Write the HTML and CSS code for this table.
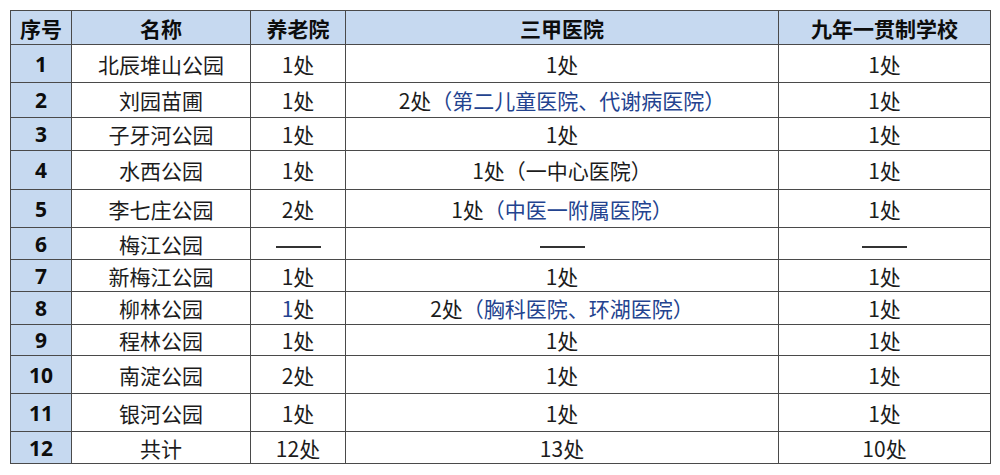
FILE: index.html
```html
<!DOCTYPE html>
<html lang="zh">
<head>
<meta charset="utf-8">
<link rel="stylesheet" href="styles.css">
</head>
<body>
<table class="grid">
  <colgroup>
    <col class="c-no"><col class="c-name"><col class="c-elder"><col class="c-hosp"><col class="c-school">
  </colgroup>
  <thead>
    <tr class="h34"><th>序号</th><th>名称</th><th>养老院</th><th>三甲医院</th><th>九年一贯制学校</th></tr>
  </thead>
  <tbody>
    <tr class="h38"><td class="no">1</td><td>北辰堆山公园</td><td>1处</td><td>1处</td><td>1处</td></tr>
    <tr class="h35"><td class="no">2</td><td>刘园苗圃</td><td>1处</td><td>2处<span class="blue">（第二儿童医院、代谢病医院）</span></td><td>1处</td></tr>
    <tr class="h33"><td class="no">3</td><td>子牙河公园</td><td>1处</td><td>1处</td><td>1处</td></tr>
    <tr class="h39"><td class="no">4</td><td>水西公园</td><td>1处</td><td>1处（一中心医院）</td><td>1处</td></tr>
    <tr class="h38"><td class="no">5</td><td>李七庄公园</td><td>2处</td><td>1处<span class="blue">（中医一附属医院）</span></td><td>1处</td></tr>
    <tr class="h32"><td class="no">6</td><td>梅江公园</td><td><span class="dash"></span></td><td><span class="dash"></span></td><td><span class="dash"></span></td></tr>
    <tr class="h32"><td class="no">7</td><td>新梅江公园</td><td>1处</td><td>1处</td><td>1处</td></tr>
    <tr class="h33"><td class="no">8</td><td>柳林公园</td><td><span class="blue">1</span>处</td><td>2处<span class="blue">（胸科医院、环湖医院）</span></td><td>1处</td></tr>
    <tr class="h31"><td class="no">9</td><td>程林公园</td><td>1处</td><td>1处</td><td>1处</td></tr>
    <tr class="h38"><td class="no">10</td><td>南淀公园</td><td>2处</td><td>1处</td><td>1处</td></tr>
    <tr class="h38"><td class="no">11</td><td>银河公园</td><td>1处</td><td>1处</td><td>1处</td></tr>
    <tr class="h32"><td class="no">12</td><td>共计</td><td>12处</td><td>13处</td><td>10处</td></tr>
  </tbody>
</table>
</body>
</html>
```

FILE: styles.css
```css
html, body {
  margin: 0;
  padding: 0;
  background: #ffffff;
}

body {
  padding: 10px 0 0 10px;
  font-family: "Noto Sans CJK SC", "Noto Sans", sans-serif;
  color: #1c1c1c;
}

.grid {
  border-collapse: collapse;
  table-layout: fixed;
  width: 980px;
}

.c-no { width: 61px; }
.c-name { width: 179px; }
.c-elder { width: 95px; }
.c-hosp { width: 433px; }
.c-school { width: 212px; }

.grid th,
.grid td {
  border: 1px solid #4a4a4a;
  padding: 0;
  text-align: center;
  vertical-align: middle;
  font-size: 21px;
  line-height: 24px;
  white-space: nowrap;
  overflow: hidden;
  font-feature-settings: "chws" 0, "halt" 0, "palt" 0;
}

.grid th {
  background: #c6d9f0;
  color: #0d0d0d;
  font-weight: 700;
  font-size: 21px;
}

.grid td.no {
  background: #c6d9f0;
  color: #0d0d0d;
  font-weight: 700;
  font-family: "Open Sans", "Noto Sans CJK SC", sans-serif;
  font-size: 21px;
}

.h31 { height: 31px; }
.h32 { height: 32px; }
.h33 { height: 33px; }
.h34 { height: 34px; }
.h35 { height: 35px; }
.h38 { height: 38px; }
.h39 { height: 39px; }

.blue {
  color: #23438f;
}

.dash {
  display: inline-block;
  width: 45px;
  height: 2px;
  background: #333333;
  vertical-align: middle;
}
```
